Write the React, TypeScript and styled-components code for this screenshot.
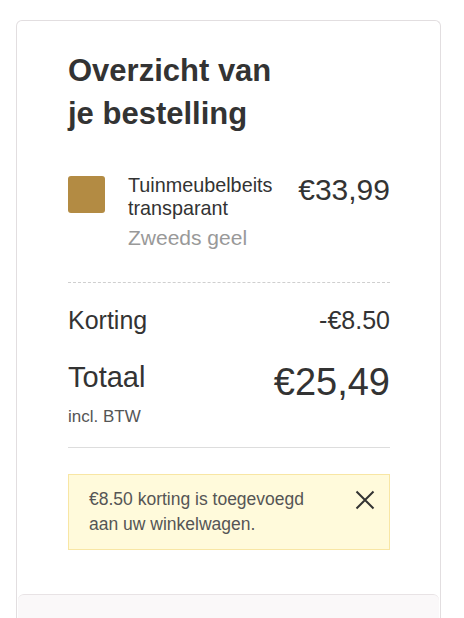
import React from 'react';
import styled, { createGlobalStyle } from 'styled-components';

const GlobalStyle = createGlobalStyle`
  body {
    margin: 0;
    background: #fff;
    font-family: 'Liberation Sans', Arial, sans-serif;
    color: #333;
  }
`;

const CloseIcon = () => (
  <svg width="20" height="20" viewBox="0 0 20 20" fill="none">
    <path d="M1.5 1.5 L18.5 18.5 M18.5 1.5 L1.5 18.5" stroke="#333" strokeWidth="2" />
  </svg>
);

const App = () => {
  return (
    <>
      <GlobalStyle />
      <Card>
        <Content>
          <Title>
            Overzicht van
            <br />
            je bestelling
          </Title>

          <ProductRow>
            <Swatch $color="#b38b43" />
            <ProductInfo>
              <ProductName>Tuinmeubelbeits transparant</ProductName>
              <Variant>Zweeds geel</Variant>
            </ProductInfo>
            <Price>€33,99</Price>
          </ProductRow>

          <DiscountRow>
            <span>Korting</span>
            <span>-€8.50</span>
          </DiscountRow>

          <TotalRow>
            <div>
              <TotalLabel>Totaal</TotalLabel>
              <Vat>incl. BTW</Vat>
            </div>
            <TotalPrice>€25,49</TotalPrice>
          </TotalRow>

          <Notice>
            <NoticeText>€8.50 korting is toegevoegd aan uw winkelwagen.</NoticeText>
            <CloseButton aria-label="Sluiten">
              <CloseIcon />
            </CloseButton>
          </Notice>
        </Content>
        <Footer />
      </Card>
    </>
  );
};

const Card = styled.div`
  margin: 20px 0 0 16px;
  width: 423px;
  border: 1px solid #e2dee0;
  border-bottom: none;
  border-radius: 6px 6px 0 0;
  background: #fff;
`;

const Content = styled.div`
  padding: 28px 50px 44px 51px;
`;

const Title = styled.h2`
  margin: 0;
  font-size: 31px;
  line-height: 43px;
  font-weight: 700;
  color: #333;
`;

const ProductRow = styled.div`
  display: flex;
  align-items: flex-start;
  margin-top: 39px;
  padding-bottom: 31px;
  border-bottom: 1px dashed #cfcfcf;
`;

const Swatch = styled.div<{ $color: string }>`
  flex: none;
  width: 37px;
  height: 37px;
  margin-top: 2px;
  border-radius: 3px;
  background: ${({ $color }) => $color};
`;

const ProductInfo = styled.div`
  flex: 1;
  margin: 0 16px 0 23px;
`;

const ProductName = styled.div`
  font-size: 19.8px;
  line-height: 23px;
  color: #333;
`;

const Variant = styled.div`
  margin-top: 4px;
  font-size: 21px;
  line-height: 27px;
  color: #999;
`;

const Price = styled.div`
  flex: none;
  margin-top: -1px;
  font-size: 30px;
  line-height: 34px;
  color: #333;
`;

const DiscountRow = styled.div`
  display: flex;
  justify-content: space-between;
  margin-top: 23px;
  font-size: 25px;
  line-height: 29px;
  color: #333;
`;

const TotalRow = styled.div`
  display: flex;
  justify-content: space-between;
  align-items: flex-start;
  margin-top: 26px;
  padding-bottom: 20px;
  border-bottom: 1px solid #dddddd;
`;

const TotalLabel = styled.div`
  font-size: 29px;
  line-height: 33px;
  color: #333;
`;

const Vat = styled.div`
  margin-top: 13px;
  font-size: 17px;
  line-height: 20px;
  color: #555;
`;

const TotalPrice = styled.div`
  margin-top: -1px;
  font-size: 38px;
  line-height: 44px;
  color: #333;
`;

const Notice = styled.div`
  display: flex;
  align-items: flex-start;
  justify-content: space-between;
  margin-top: 26px;
  padding: 12px 14px 12px 20px;
  background: #fffadb;
  border: 1px solid #f8e6a4;
`;

const NoticeText = styled.p`
  margin: 0;
  max-width: 240px;
  font-size: 17.5px;
  line-height: 25px;
  color: #555;
`;

const CloseButton = styled.button`
  display: flex;
  padding: 0;
  margin-top: 3px;
  border: none;
  background: none;
  cursor: pointer;
`;

const Footer = styled.div`
  height: 40px;
  margin: 0 1px;
  background: #faf8f9;
  border-top: 1px solid #e8e3e5;
  border-radius: 6px 6px 0 0;
`;

export default App;
